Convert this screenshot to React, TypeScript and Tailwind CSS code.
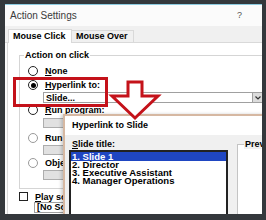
import React from "react";

function Radio({ checked, dim }: { checked?: boolean; dim?: boolean }) {
  return (
    <span
      className={
        dim
          ? "w-[10px] h-[10px] rounded-full border border-[#9a9a9a] bg-white flex items-center justify-center shrink-0"
          : "w-[10px] h-[10px] rounded-full border border-[#222] bg-white flex items-center justify-center shrink-0"
      }
    >
      {checked && <span className="w-[5px] h-[5px] rounded-full bg-black" />}
    </span>
  );
}

function Btn() {
  return <div className="ml-[15px] w-[60px] h-[10px] bg-[#e1e1e1] border border-[#adadad] shrink-0" />;
}

export default function App() {
  return (
    <div className="relative w-[266px] h-[220px] overflow-hidden bg-[#34383c] pt-[4px] pl-[5px] pr-[4px] pb-[6px] font-['Liberation_Sans',Arial,sans-serif] text-black">
      <div className="relative h-full overflow-hidden bg-[#fbfbfb] border-t border-[#8ccbe0] flex flex-col">
        {/* title bar */}
        <div className="h-[21px] shrink-0 flex items-center justify-between pl-[5px] pr-[20px]">
          <span className="text-[10px] text-[#3a3a3a] leading-none">Action Settings</span>
          <span className="text-[9px] text-[#555] leading-none">?</span>
        </div>
        {/* tabs */}
        <div className="h-[17px] shrink-0 bg-[#f0f0f0] flex items-end pl-[3px] border-b border-[#d9d9d9]">
          <div className="h-[14px] w-[64px] -mb-px bg-white border border-b-0 border-[#d9d9d9] pl-[4px] text-[9px] font-bold leading-[13px] whitespace-nowrap">
            Mouse Click
          </div>
          <div className="h-[12px] w-[62px] border border-b-0 border-l-0 border-[#d9d9d9] pl-[4px] text-[9px] font-bold leading-[11px] whitespace-nowrap">
            Mouse Over
          </div>
        </div>
        {/* content */}
        <div className="flex-1 ml-[2px] bg-white border-l border-[#d9d9d9] overflow-hidden flex flex-col">
          <fieldset className="mt-[7px] ml-[11px] w-[260px] shrink-0 border border-[#d5d5d5] p-0 m-0">
            <legend className="ml-[4px] px-[1px] text-[9px] font-bold leading-[10px]">Action on click</legend>
            <div className="pl-[8px] pb-[8px] flex flex-col text-[9px] font-bold leading-[10px]">
              <div className="mt-[6px] h-[10px] flex items-center gap-[7px]">
                <Radio />
                <span><u>N</u>one</span>
              </div>
              <div className="mt-[4px] h-[10px] flex items-center gap-[7px]">
                <Radio checked />
                <span><u>H</u>yperlink to:</span>
              </div>
              <div className="mt-[2px] ml-[15px] w-[220px] h-[11px] border border-[#a0a0a0] bg-white flex items-center justify-between">
                <span className="pl-[2px]">Slide...</span>
                <span className="w-[10px] h-full bg-[#dcdcdc] border-l border-[#a0a0a0] flex items-center justify-center">
                  <svg width="6" height="4" viewBox="0 0 6 4">
                    <path d="M0.5 0.5 L3 3 L5.5 0.5" fill="none" stroke="#333" strokeWidth="1.2" />
                  </svg>
                </span>
              </div>
              <div className="mt-[2px] h-[10px] flex items-center gap-[7px]">
                <Radio />
                <span><u>R</u>un program:</span>
              </div>
              <div className="mt-[3px]"><Btn /></div>
              <div className="mt-[5px] h-[10px] flex items-center gap-[7px]">
                <Radio dim />
                <span>Run macro:</span>
              </div>
              <div className="mt-[2px]"><Btn /></div>
              <div className="mt-[3px] h-[10px] flex items-center gap-[7px]">
                <Radio dim />
                <span>Object action:</span>
              </div>
              <div className="mt-[2px]"><Btn /></div>
            </div>
          </fieldset>
          <div className="mt-[3px] ml-[11px] h-[9px] flex items-center gap-[7px] text-[9px] font-bold leading-[10px]">
            <span className="w-[9px] h-[9px] border border-[#222] bg-white shrink-0" />
            <span className="whitespace-nowrap"><u>P</u>lay sound:</span>
          </div>
          <div className="mt-[1px] ml-[26px] w-[100px] h-[11px] border border-[#a0a0a0] bg-white text-[9px] font-bold leading-[9px] pl-[2px] whitespace-nowrap">
            [No Sound]
          </div>
        </div>

        {/* Hyperlink to Slide dialog (overlapping) */}
        <div className="absolute left-[58px] top-[109px] right-[-40px] bottom-[-40px] border-t-2 border-l-2 border-[#d6b8a2] bg-[#f0f0f0] shadow-[-2px_0_3px_rgba(0,0,0,0.18)] flex flex-col">
          <div className="h-[19px] shrink-0 bg-white pl-[7px] flex items-center text-[9px] font-bold leading-none whitespace-nowrap">
            Hyperlink to Slide
          </div>
          <div className="flex pt-[4px] pl-[4px]">
            <div className="flex flex-col">
              <div className="h-[10px] pl-[3px] text-[9px] font-bold leading-[10px] whitespace-nowrap">
                <u>S</u>lide title:
              </div>
              <div className="mt-[1px] w-[159px] h-[80px] bg-white border-2 border-[#222] text-[9.5px] font-bold leading-[8px] whitespace-nowrap">
                <div className="h-[9px] bg-[#1f46c2] text-white pl-[1px] leading-[9px]">1. Slide 1</div>
                <div className="pl-[1px]">2. Director</div>
                <div className="pl-[1px]">3. Executive Assistant</div>
                <div className="pl-[1px]">4. Manager Operations</div>
              </div>
            </div>
            <fieldset className="ml-[9px] w-[60px] h-[90px] border border-[#c4c4c4] bg-white p-0 m-0">
              <legend className="ml-[6px] px-[1px] text-[9px] font-bold leading-[10px] bg-[#f0f0f0]">Preview</legend>
            </fieldset>
          </div>
        </div>
      </div>

      {/* red highlight box */}
      <div className="absolute left-[13px] top-[77px] w-[95px] h-[30px] border-[3px] border-[#c4121a]" />
      {/* red arrow */}
      <svg className="absolute left-[108px] top-[80px]" width="56" height="42" viewBox="0 0 56 42">
        <path
          d="M20 2 H34 V16 H50 L27 38 L4 16 H20 Z"
          fill="white"
          stroke="#c4121a"
          strokeWidth="3"
          strokeLinejoin="miter"
        />
      </svg>
    </div>
  );
}
